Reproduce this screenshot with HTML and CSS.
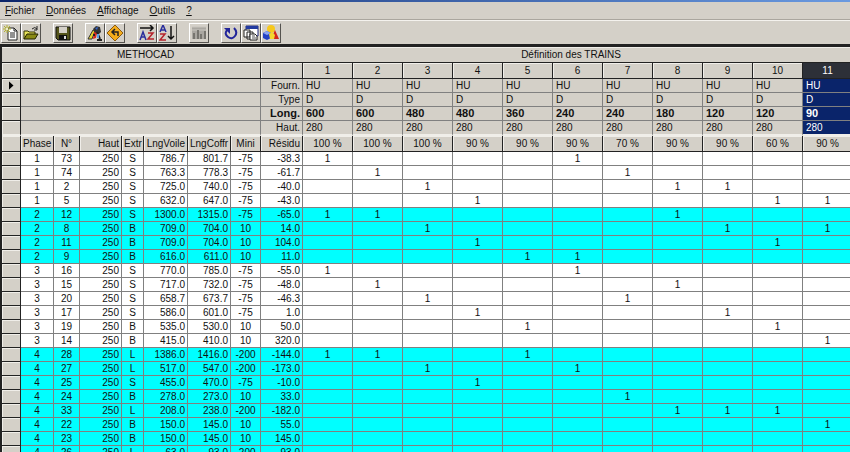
FILE: index.html
```html
<!DOCTYPE html>
<html lang="fr">
<head>
  <meta charset="UTF-8" />
  <meta name="viewport" content="width=device-width, initial-scale=1" />
  <title>Methocad</title>
  <link rel="stylesheet" href="styles.css">
</head>
<body>

  <div class="title-edge"></div>

  <nav class="menu-bar">
    <a href="#"><u>F</u>ichier</a>
    <a href="#"><u>D</u>onnées</a>
    <a href="#"><u>A</u>ffichage</a>
    <a href="#"><u>O</u>utils</a>
    <a href="#"><u>?</u></a>
  </nav>

  <!-- Toolbar -->
  <div class="toolbar">
    <div class="group">
      <button type="button" aria-label="Nouveau">
        <svg viewBox="0 0 16 16"><path d="M5 3h6l3 3v9H5z" fill="#fff" stroke="#222"/><path d="M11 3v3h3M7 8h5M7 10h5M7 12h5" fill="none" stroke="#222"/><path d="M4 0v8M0 4h8M1 1l6 6M7 1L1 7" stroke="#b5b32c"/><circle cx="4" cy="4" r="1" fill="#fff"/></svg>
      </button>
      <button type="button" aria-label="Ouvrir">
        <svg viewBox="0 0 16 16"><path d="M1 14V6h4l1 1h6v3" fill="#e8e35a" stroke="#333300"/><path d="M1 14l3-5h11l-3 5z" fill="#8a8a14" stroke="#222200"/><path d="M9 4q3-3 5 0M14 1v4h-3" fill="none" stroke="#222"/></svg>
      </button>
    </div>
    <div class="group">
      <button type="button" aria-label="Enregistrer">
        <svg viewBox="0 0 16 16"><path d="M1 2h14v13H3l-2-2z" fill="#55551c" stroke="#111"/><path d="M4 2h8v6H4z" fill="#d4d0c8"/><path d="M4 10h8v5H4z" fill="#111"/><path d="M9 11h2v3H9z" fill="#ddd"/></svg>
      </button>
    </div>
    <div class="group">
      <button type="button" aria-label="Calculer">
        <svg viewBox="0 0 16 16"><path d="M1 14l5-9 2 1-3 8z" fill="#e5d32a" stroke="#333"/><path d="M6 4l3-3 4 1 1 5-2 2-4-1z" fill="#333"/><path d="M8 3l3-1-1 3z" fill="#3566d0"/><path d="M7 7l3 1-1 5-3 1z" fill="#d92a20"/><path d="M10 7l3 7M6 10h2M10 15h5" stroke="#222" stroke-width="2"/><path d="M10 9h2v4h-2z" fill="#56a2e8"/></svg>
      </button>
      <button type="button" aria-label="Orienter">
        <svg viewBox="0 0 16 16"><path d="M8 0l8 8-8 8-8-8z" fill="#f4ad1c" stroke="#8a5a10"/><path d="M11 11V7H6M8 4L5 7l3 3" fill="none" stroke="#222" stroke-width="1.5"/></svg>
      </button>
    </div>
    <div class="group">
      <button type="button" aria-label="Trier les colonnes">
        <svg viewBox="0 0 16 16"><path d="M1 3h13M11 0l3 3-3 3" fill="none" stroke="#111" stroke-width="1.5"/><path d="M1 15l3-8 3 8M2 12h4" fill="none" stroke="#2a2d9c" stroke-width="1.5"/><path d="M9 8h5l-5 6h6" fill="none" stroke="#b5232b" stroke-width="1.5"/></svg>
      </button>
      <button type="button" aria-label="Trier les lignes">
        <svg viewBox="0 0 16 16"><path d="M1 7l3-7 3 7M2 5h4" fill="none" stroke="#2a2d9c" stroke-width="1.5"/><path d="M1 9h5l-5 6h6" fill="none" stroke="#b5232b" stroke-width="1.5"/><path d="M12 1v13M9 11l3 3 3-3" fill="none" stroke="#111" stroke-width="1.5"/></svg>
      </button>
    </div>
    <div class="group">
      <button type="button" aria-label="Graphique" disabled>
        <svg viewBox="0 0 16 16"><path d="M1 2h14v12H1z" fill="#aaa7a1"/><path d="M1 2h14M1 5h14" stroke="#c8c5be"/><path d="M2 14V8h2v6M6 14V5h2v9M9 14V9h2v5M13 14V6h2v8" fill="#77756f"/></svg>
      </button>
    </div>
    <div class="group">
      <button type="button" aria-label="Actualiser">
        <svg viewBox="0 0 16 16"><path d="M11 3q4 4 1 8t-7 1q-4-3-1-7" fill="none" stroke="#22259a" stroke-width="2"/><path d="M1 3h6v6z" fill="#22259a"/></svg>
      </button>
      <button type="button" aria-label="Fenêtres">
        <svg viewBox="0 0 16 16"><path d="M3 1h12v10H3z" fill="#fff" stroke="#222c7c"/><path d="M3 1h12v3H3z" fill="#223aa0"/><path d="M1 5h6v7H1zM4 7h6v7H4z" fill="#fff" stroke="#222"/><path d="M7 9h5l2 2v4H7z" fill="#fff" stroke="#222"/><path d="M9 11h3M9 13h4" stroke="#555"/></svg>
      </button>
      <button type="button" aria-label="Formes">
        <svg viewBox="0 0 16 16"><circle cx="8" cy="4" r="4" fill="#f6c81c"/><path d="M0 8l4-2 4 2v5l-4 2-4-2z" fill="#2442c4"/><path d="M0 8l4-2 4 2-4 2z" fill="#8ba4f0"/><path d="M12 5l4 9H8z" fill="#d4251c"/><path d="M6 9l3-2 3 3-1 4H7z" fill="#f3d630"/></svg>
      </button>
    </div>
  </div>

  <!-- Planning grid -->
  <main class="grid">
    <table id="planning">
      <colgroup>
        <col class="c-sel"><col class="c-phase"><col class="c-num"><col class="c-haut"><col class="c-extr">
        <col class="c-voile"><col class="c-coffr"><col class="c-mini"><col class="c-residu">
        <col class="c-train" span="11">
      </colgroup>
      <thead id="trains"></thead>
      <tbody id="walls"></tbody>
    </table>
  </main>

  <script src="grid.js"></script>
</body>
</html>
```
FILE: styles.css
```css
* {
  box-sizing: border-box;
}
body {
  margin: 0;
  height: 100vh;
  display: flex;
  flex-direction: column;
  overflow: hidden;
  background: #d4d0c8;
  color: #111;
  font-family: "Liberation Sans", Arial, sans-serif;
  font-size: 10px;
}
.title-edge {
  height: 2px;
  flex: none;
  background: linear-gradient(to right, #0a246a, #6a9ae0);
}
.menu-bar {
  display: flex;
  gap: 11px;
  height: 18px;
  flex: none;
  padding: 0 5px;
  line-height: 18px;
  border-bottom: 1px solid #aaa69e;
}
.menu-bar a {
  color: #111;
  text-decoration: none;
}

/* toolbar */
.toolbar {
  display: flex;
  gap: 12px;
  height: 24px;
  flex: none;
  padding: 2px 1px;
  border-top: 1px solid #f4f2ee;
}
.group {
  display: flex;
}
.toolbar button {
  width: 20px;
  height: 20px;
  padding: 1px;
  background: #d4d0c8;
  border: 1px solid;
  border-color: #fff #55534f #55534f #fff;
}
.toolbar svg {
  display: block;
  width: 16px;
  height: 16px;
}

/* grid */
.grid {
  flex: 1;
  overflow: hidden;
  border-top: 3px solid #222;
  border-left: 2px solid #222;
}
table {
  width: 851px;
  table-layout: fixed;
  border-collapse: separate;
  border-spacing: 0;
}
.c-sel { width: 19px; }
.c-phase { width: 33px; }
.c-num { width: 26px; }
.c-haut { width: 42px; }
.c-extr { width: 22px; }
.c-voile { width: 44px; }
.c-coffr { width: 43px; }
.c-mini { width: 30px; }
.c-residu { width: 42px; }
.c-train { width: 50px; }

th, td {
  height: 14px;
  padding: 0 2px;
  line-height: 13px;
  font-weight: normal;
  text-align: center;
  white-space: nowrap;
  overflow: hidden;
  border-right: 1px solid #808080;
  border-bottom: 1px solid #808080;
}
.band th, .numbers th, .columns th, .sel {
  background: #d4d0c8;
  border-right: 1px solid #222;
  border-bottom: 1px solid #222;
  box-shadow: inset 1px 1px #f0eee9;
}
.band th, .numbers th, .columns th {
  height: 16px;
  line-height: 15px;
}
.band th {
  padding-right: 16px;
  border-right: none;
  box-shadow: inset 0 1px #f0eee9;
}
.props th, .props td {
  background: #d4d0c8;
}
.props td {
  padding-left: 3px;
  text-align: left;
}
.long th, .long td {
  font-size: 11px;
  font-weight: bold;
}
.haut th, .haut td {
  border-bottom: 2px solid #f0eee9;
  height: 15px;
}
.props .sel {
  border-right: 1px solid #222;
}
.numbers .current {
  background: #2d3038;
  color: #fff;
  box-shadow: none;
}
.props .current {
  background: #0a246a;
  color: #fff;
}
th.right, td.right {
  text-align: right;
}
.arrow {
  display: block;
  width: 5px;
  height: 9px;
  margin: 0 auto;
  background: #000;
  clip-path: polygon(0 0, 100% 50%, 0 100%);
}
tbody tr {
  background: #fff;
}
tbody .cyan {
  background: #00ffff;
}
```
FILE: grid.js
```js
const percents = [100, 100, 100, 90, 90, 90, 70, 90, 90, 60, 90];

const props = [
  { label: 'Fourn.', cls: 'fourn', values: Array(11).fill('HU') },
  { label: 'Type', cls: 'type', values: Array(11).fill('D') },
  { label: 'Long.', cls: 'long', values: [600, 600, 480, 480, 360, 240, 240, 180, 120, 120, 90] },
  { label: 'Haut.', cls: 'haut', values: Array(11).fill(280) }
];

// phase, n°, extr, lngVoile, lngCoffr, mini, résidu, trains
const walls = [
  [1, 73, 'S', '786.7', '801.7', -75, '-38.3', [1, 6]],
  [1, 74, 'S', '763.3', '778.3', -75, '-61.7', [2, 7]],
  [1, 2, 'S', '725.0', '740.0', -75, '-40.0', [3, 8, 9]],
  [1, 5, 'S', '632.0', '647.0', -75, '-43.0', [4, 10, 11]],
  [2, 12, 'S', '1300.0', '1315.0', -75, '-65.0', [1, 2, 8]],
  [2, 8, 'B', '709.0', '704.0', 10, '14.0', [3, 9, 11]],
  [2, 11, 'B', '709.0', '704.0', 10, '104.0', [4, 10]],
  [2, 9, 'B', '616.0', '611.0', 10, '11.0', [5, 6]],
  [3, 16, 'S', '770.0', '785.0', -75, '-55.0', [1, 6]],
  [3, 15, 'S', '717.0', '732.0', -75, '-48.0', [2, 8]],
  [3, 20, 'S', '658.7', '673.7', -75, '-46.3', [3, 7]],
  [3, 17, 'S', '586.0', '601.0', -75, '1.0', [4, 9]],
  [3, 19, 'B', '535.0', '530.0', 10, '50.0', [5, 10]],
  [3, 14, 'B', '415.0', '410.0', 10, '320.0', [11]],
  [4, 28, 'L', '1386.0', '1416.0', -200, '-144.0', [1, 2, 5]],
  [4, 27, 'L', '517.0', '547.0', -200, '-173.0', [3, 6]],
  [4, 25, 'S', '455.0', '470.0', -75, '-10.0', [4]],
  [4, 24, 'B', '278.0', '273.0', 10, '33.0', [7]],
  [4, 33, 'L', '208.0', '238.0', -200, '-182.0', [8, 9, 10]],
  [4, 22, 'B', '150.0', '145.0', 10, '55.0', [11]],
  [4, 23, 'B', '150.0', '145.0', 10, '145.0', []],
  [4, 26, 'L', '63.0', '93.0', -200, '-93.0', []]
];

const current = i => i === 10 ? ' class="current"' : '';

let head = '<tr class="band"><th colspan="9">METHOCAD</th><th colspan="11">Définition des TRAINS</th></tr>';
head += '<tr class="numbers"><th></th><th colspan="7"></th><th></th>';
head += percents.map((p, i) => `<th${current(i)}>${i + 1}</th>`).join('') + '</tr>';

props.forEach((row, n) => {
  head += `<tr class="props ${row.cls}"><th class="sel">${n === 0 ? '<span class="arrow"></span>' : ''}</th>`;
  head += `<td colspan="7"></td><th class="right">${row.label}</th>`;
  head += row.values.map((v, i) => `<td${current(i)}>${v}</td>`).join('') + '</tr>';
});

head += '<tr class="columns"><th></th><th>Phase</th><th>N°</th><th class="right">Haut</th><th>Extr</th>';
head += '<th class="right">LngVoile</th><th class="right">LngCoffr</th><th>Mini</th><th class="right">Résidu</th>';
head += percents.map(p => `<th>${p} %</th>`).join('') + '</tr>';
document.getElementById('trains').innerHTML = head;

document.getElementById('walls').innerHTML = walls.map(w => {
  const [phase, num, extr, voile, coffr, mini, residu, trains] = w;
  let row = `<tr${phase % 2 ? '' : ' class="cyan"'}><th class="sel"></th><td>${phase}</td><td>${num}</td>`;
  row += `<td class="right">250</td><td>${extr}</td><td class="right">${voile}</td><td class="right">${coffr}</td>`;
  row += `<td>${mini}</td><td class="right">${residu}</td>`;
  for (let t = 1; t <= 11; t++) {
    row += `<td>${trains.includes(t) ? 1 : ''}</td>`;
  }
  return row + '</tr>';
}).join('');
```
